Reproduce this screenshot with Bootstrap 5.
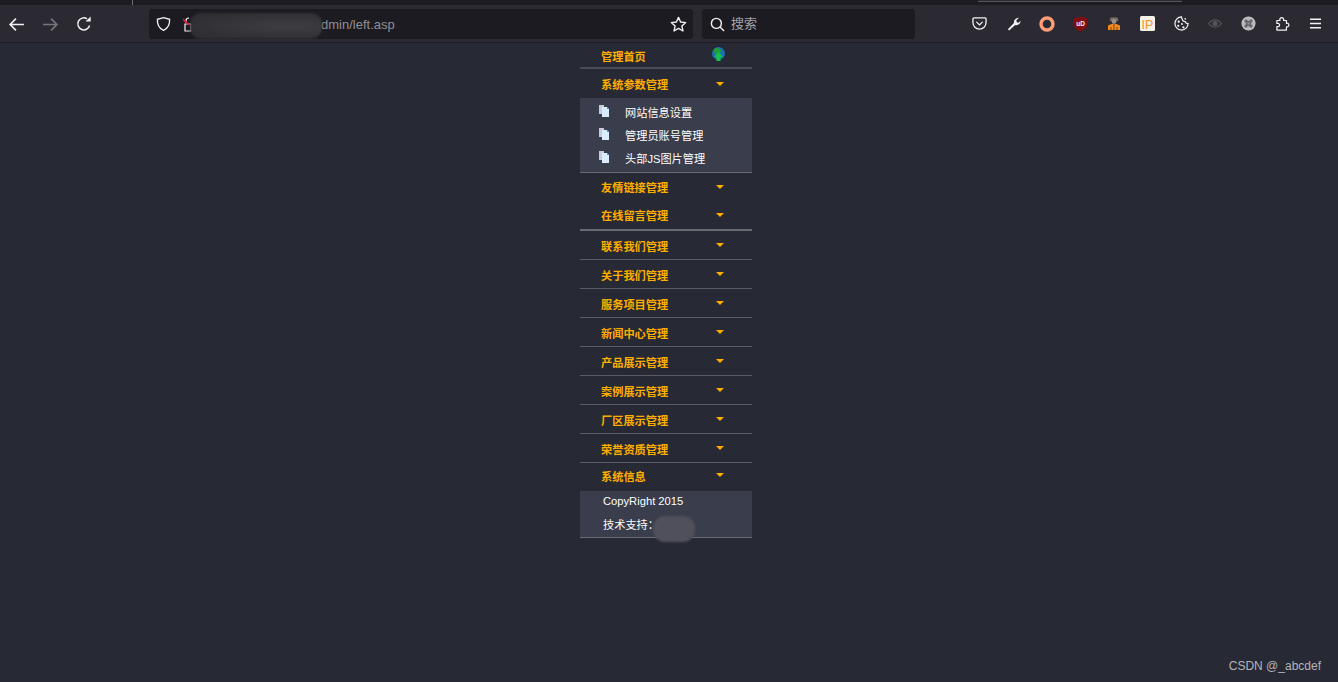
<!DOCTYPE html>
<html lang="zh">
<head>
<meta charset="utf-8">
<title>left.asp</title>
<link href="https://cdn.jsdelivr.net/npm/bootstrap@5.3.0/dist/css/bootstrap.min.css" rel="stylesheet">
<style>
html,body{height:100%;}
body{background:#272934;font-family:"Liberation Sans","Noto Sans CJK SC",sans-serif;overflow:hidden;}
.tab-strip{height:5px;background:#1c1b22;position:relative;}
.tab-mark{width:1px;height:5px;background:#6f6e75;margin-left:132px;}
.tab-shade{position:absolute;left:978px;top:0;width:204px;height:2px;background:#2c2b33;border-bottom:1px solid #55545b;}
.tool-bar{height:38px;background:#2b2a33;border-bottom:1px solid #1d1c23;}
.url-box{position:absolute;left:149px;top:9px;width:544px;height:30px;background:#1c1b22;border-radius:4px;color:#8f8f96;}
.url-text{position:absolute;left:172px;top:6px;line-height:19px;font-size:13px;}
.url-blur{position:absolute;left:41px;top:4px;width:132px;height:26px;border-radius:11px;background:radial-gradient(ellipse at 75% 50%,#3e3d42,#2f2e33 80%);filter:blur(1px);}
.search-box{position:absolute;left:702px;top:9px;width:213px;height:30px;background:#1c1b22;border-radius:4px;color:#a3a3a8;font-size:13px;}
.top-ic{position:absolute;}
.side-menu{width:172px;margin:0 auto;position:relative;left:-3px;}
.menu-head{display:flex;align-items:center;justify-content:space-between;height:29px;padding:4px 28px 0 21px;color:#ffae00;font-size:11.2px;font-weight:700;border-bottom:1px solid #5b5c63;}
.menu-head.first{height:26px;padding-top:4px;border-bottom-width:2px;border-color:#4a4b53;}
.menu-head.plain{border-bottom:0;}
.menu-head.mid{padding-top:2px;}
.menu-head.last{height:28px;padding-top:0;}
.menu-head.thick{border-bottom:2px solid #6a6b70;padding-top:2px;}
.drop-caret{width:0;height:0;border-left:4px solid transparent;border-right:4px solid transparent;border-top:4px solid #ffae00;margin-top:-4px;}
.menu-panel{background:#393d4c;color:#fff;font-size:11.2px;border-bottom:1px solid #6a6b70;}
.panel-pages{height:75px;padding-top:4px;}
.panel-item{height:23px;display:flex;align-items:center;padding-left:19px;}
.panel-item svg{margin-top:-6px;margin-right:16px;}
.panel-info{height:47px;padding:0 0 0 23px;position:relative;}
.panel-info div{height:24px;line-height:21px;}
.panel-blur{position:absolute;left:73px;top:25px;width:42px;height:26px;border-radius:12px;background:#4f505b;filter:blur(1px);}
.watermark{position:absolute;right:17px;bottom:7px;color:#b4b4b8;font-size:12px;}
</style>
</head>
<body>
<div class="tab-strip"><div class="tab-mark"></div><div class="tab-shade"></div></div>
<div class="tool-bar"></div>

<svg class="top-ic" style="left:8px;top:16px" width="17" height="17" viewBox="0 0 16 16" fill="none" stroke="#f2f2f4" stroke-width="1.5"><path d="M15 8H2M7.500 2.500 2 8l5.500 5.500"/></svg>
<svg class="top-ic" style="left:42px;top:16px" width="17" height="17" viewBox="0 0 16 16" fill="none" stroke="#77767d" stroke-width="1.500"><path d="M1 8h13M8.500 2.500 14 8l-5.500 5.500"/></svg>
<svg class="top-ic" style="left:76px;top:16px" width="16" height="16" viewBox="0 0 16 16" fill="none" stroke="#f2f2f4" stroke-width="1.500"><path d="M13.600 9.500A6 6 0 1 1 11 2.800"/><path d="M9.500 5.600h5.200V.6z" fill="#f2f2f4" stroke="none"/></svg>

<div class="url-box">
  <svg class="top-ic" style="left:7px;top:7px" width="15" height="16" viewBox="0 0 16 16" fill="none" stroke="#f2f2f4" stroke-width="1.400"><path d="M8 1.200 14.500 3c.3 5.500-1.500 9.600-6.500 11.900C3 12.600 1.200 8.500 1.500 3z"/></svg>
  <svg class="top-ic" style="left:34px;top:8px" width="9" height="15" viewBox="0 0 9 15" fill="none"><path d="M2 7h6v7H2zM3 6V3.500C3 2 4 1 6 1" stroke="#f2f2f4" stroke-width="1.200"/><path d="M0 2l6 6" stroke="#e5173f" stroke-width="1.600"/></svg>
  <span class="url-text">dmin/left.asp</span>
  <div class="url-blur"></div>
  <svg class="top-ic" style="left:521px;top:7px" width="17" height="17" viewBox="0 0 16 16" fill="none" stroke="#f2f2f4" stroke-width="1.300" stroke-linejoin="round"><path d="M8 1.300 10 5.700l4.800.5-3.600 3.200 1 4.700L8 11.700l-4.200 2.400 1-4.700L1.200 6.200 6 5.700z"/></svg>
</div>
<div class="search-box d-flex align-items-center">
  <svg class="ms-2" width="15" height="15" viewBox="0 0 16 16" fill="none" stroke="#f2f2f4" stroke-width="1.500"><circle cx="6.800" cy="6.800" r="5.300"/><path d="M10.700 10.700 15 15"/></svg>
  <span style="margin-left:6px">搜索</span>
</div>

<svg class="top-ic" style="left:972px;top:16px" width="15" height="15" viewBox="0 0 16 16" fill="none" stroke="#f2f2f4" stroke-width="1.400"><path d="M2.200 2h11.600c.7 0 1.200.5 1.200 1.200V7c0 4-3.200 7-7 7s-7-3-7-7V3.200C1 2.500 1.500 2 2.200 2z"/><path d="M5 6.500 8 9.500l3-3" stroke-linecap="round"/></svg>
<svg class="top-ic" style="left:1006px;top:16px" width="15" height="15" viewBox="0 0 16 16" fill="none"><path d="M2 14 8.500 7.500C7.800 5 9.800 1.800 13.500 2L11 4.800l.5 1.800 1.900.5L15.500 5c.3 3.300-2.800 5.500-5.700 4.500L3.300 15.500z" fill="#f2f2f4"/></svg>
<svg class="top-ic" style="left:1039px;top:16px" width="16" height="16" viewBox="0 0 16 16" fill="none"><circle cx="8" cy="8" r="6" stroke="#ff9d78" stroke-width="3.400"/></svg>
<svg class="top-ic" style="left:1073px;top:16px" width="15" height="16" viewBox="0 0 15 16"><path d="M.8 2.300 7.500.8l6.700 1.500v6.200c0 3.200-3.200 5.800-6.700 7C4 14.300.8 11.700.8 8.500z" fill="#800f12"/><text x="7.500" y="9.600" text-anchor="middle" font-size="6.500" font-weight="700" fill="#f2f2f4" font-family="Liberation Sans">uD</text></svg>
<svg class="top-ic" style="left:1107px;top:16px" width="14" height="15" viewBox="0 0 14 15"><path d="M3.500 1.500h7L11.500 5h-9z" fill="#77706a"/><circle cx="7" cy="5.500" r="2.400" fill="#9a8f84"/><path d="M1 14V9.500L4.500 8h5L13 9.500V14z" fill="#f38a1b"/><path d="M6.500 8h1v6h-1zM3.500 11h1v3h-1zM9.500 11h1v3h-1z" fill="#7a4a12"/></svg>
<svg class="top-ic" style="left:1140px;top:16px" width="15" height="15" viewBox="0 0 15 15"><rect width="15" height="15" rx="1.500" fill="#f4f1ea"/><text x="7.500" y="12.500" text-anchor="middle" font-size="12.500" fill="#f7931e" font-family="Liberation Sans">IP</text></svg>
<svg class="top-ic" style="left:1174px;top:16px" width="15" height="15" viewBox="0 0 16 16" fill="none" stroke="#f2f2f4" stroke-width="1.300"><path d="M8 1a7 7 0 1 0 7 7c-1.600.2-2.700-.6-3-2-1.700.1-3-1-3-2.500C8 2.800 8 2 8 1z"/><g fill="#f2f2f4" stroke="none"><circle cx="5" cy="6" r="1.200"/><circle cx="4.500" cy="10.500" r="1.200"/><circle cx="8.500" cy="8.500" r="1"/><circle cx="10" cy="12" r="1.200"/><circle cx="12" cy="3" r=".9"/></g></svg>
<svg class="top-ic" style="left:1208px;top:18px" width="14" height="11" viewBox="0 0 16 12" fill="none" stroke="#55555b" stroke-width="1.300"><path d="M.8 6C4.500.5 11.500.5 15.200 6 11.500 11.500 4.500 11.500.8 6z"/><circle cx="8" cy="6" r="2.300" fill="#55555b"/></svg>
<svg class="top-ic" style="left:1241px;top:16px" width="15" height="15" viewBox="0 0 15 15"><defs><radialGradient id="gl"><stop offset="0" stop-color="#8d8d90"/><stop offset="1" stop-color="#c9c9ca"/></radialGradient></defs><circle cx="7.500" cy="7.500" r="7" fill="url(#gl)"/><path d="M5.800 5.800h3.400v3.400H5.800z" fill="none" stroke="#4f4f52" stroke-width="1"/><g fill="none" stroke="#4f4f52" stroke-width="1"><circle cx="4.800" cy="4.800" r="1"/><circle cx="10.200" cy="4.800" r="1"/><circle cx="4.800" cy="10.200" r="1"/><circle cx="10.200" cy="10.200" r="1"/></g></svg>
<svg class="top-ic" style="left:1275px;top:16px" width="15" height="15" viewBox="0 0 16 16" fill="none" stroke="#f2f2f4" stroke-width="1.300" stroke-linejoin="round"><path d="M2 4.800h3.300a2.100 2.100 0 1 1 3.800 0h3.100v3a2 2 0 1 1 0 3.800v3.400H2v-3.700h1.200a1.700 1.700 0 0 0 0-3.400H2z"/></svg>
<svg class="top-ic" style="left:1309px;top:18px" width="13" height="11" viewBox="0 0 13 11" stroke="#f2f2f4" stroke-width="1.400"><path d="M1 1.200h11M1 5.500h11M1 9.800h11"/></svg>

<nav class="side-menu">
  <div class="menu-head first"><span>管理首页</span>
    <svg class="top-ic" style="left:131px;top:4px" width="15" height="15" viewBox="0 0 15 15"><circle cx="7.500" cy="6.500" r="6.500" fill="#1b6fb5"/><path d="M3 2c3-2 6-1 7 1 1 2-2 3-4 4S2 5 3 2z" fill="#1e9e3a"/><path d="M7.500 5 12 10H9.500v4h-4v-4H3z" fill="#15c445"/></svg>
  </div>
  <div class="menu-head plain"><span>系统参数管理</span><i class="drop-caret"></i></div>
  <div class="menu-panel panel-pages">
    <div class="panel-item"><svg width="10" height="12" viewBox="0 0 10 12"><path d="M0 0h5v9H0z" fill="#c8ccd8"/><path d="M3 2h5l2 2v8H3z" fill="#d8eeff"/><path d="M8 2l2 2H8z" fill="#3d8fe0"/></svg><span>网站信息设置</span></div>
    <div class="panel-item"><svg width="10" height="12" viewBox="0 0 10 12"><path d="M0 0h5v9H0z" fill="#c8ccd8"/><path d="M3 2h5l2 2v8H3z" fill="#d8eeff"/><path d="M8 2l2 2H8z" fill="#3d8fe0"/></svg><span>管理员账号管理</span></div>
    <div class="panel-item"><svg width="10" height="12" viewBox="0 0 10 12"><path d="M0 0h5v9H0z" fill="#c8ccd8"/><path d="M3 2h5l2 2v8H3z" fill="#d8eeff"/><path d="M8 2l2 2H8z" fill="#3d8fe0"/></svg><span>头部JS图片管理</span></div>
  </div>
  <div class="menu-head plain mid"><span>友情链接管理</span><i class="drop-caret"></i></div>
  <div class="menu-head thick"><span>在线留言管理</span><i class="drop-caret"></i></div>
  <div class="menu-head"><span>联系我们管理</span><i class="drop-caret"></i></div>
  <div class="menu-head"><span>关于我们管理</span><i class="drop-caret"></i></div>
  <div class="menu-head"><span>服务项目管理</span><i class="drop-caret"></i></div>
  <div class="menu-head"><span>新闻中心管理</span><i class="drop-caret"></i></div>
  <div class="menu-head"><span>产品展示管理</span><i class="drop-caret"></i></div>
  <div class="menu-head"><span>案例展示管理</span><i class="drop-caret"></i></div>
  <div class="menu-head"><span>厂区展示管理</span><i class="drop-caret"></i></div>
  <div class="menu-head"><span>荣誉资质管理</span><i class="drop-caret"></i></div>
  <div class="menu-head plain last"><span>系统信息</span><i class="drop-caret"></i></div>
  <div class="menu-panel panel-info"><div>CopyRight 2015</div><div>技术支持：</div><span class="panel-blur"></span></div>
</nav>
<div class="watermark">CSDN @_abcdef</div>
<script src="https://cdn.jsdelivr.net/npm/bootstrap@5.3.0/dist/js/bootstrap.bundle.min.js"></script>
</body>
</html>
